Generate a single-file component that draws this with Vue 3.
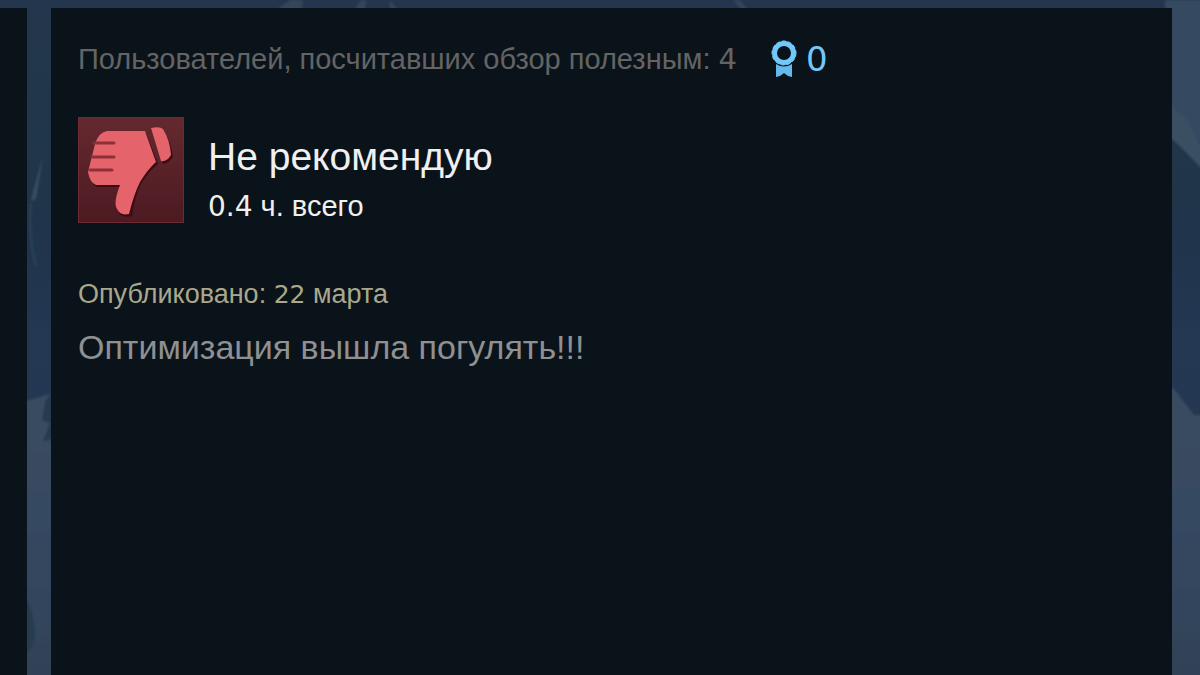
<script setup>
const review = {
  helpful: 4,
  awards: 0,
  verdict: 'Не рекомендую',
  text: 'Оптимизация вышла погулять!!!'
}
</script>

<template>
  <main class="page">
    <svg class="backdrop" viewBox="0 0 1200 675" preserveAspectRatio="none" aria-hidden="true">
      <defs>
        <linearGradient id="sky" x1="0" y1="0" x2="0" y2="1">
          <stop offset="0" stop-color="#24364d" />
          <stop offset="0.22" stop-color="#20364a" />
          <stop offset="0.35" stop-color="#20344b" />
          <stop offset="0.5" stop-color="#243753" />
          <stop offset="1" stop-color="#26384d" />
        </linearGradient>
        <linearGradient id="ridge" x1="0" y1="0" x2="0" y2="1">
          <stop offset="0" stop-color="#394d60" />
          <stop offset="0.45" stop-color="#364861" />
          <stop offset="1" stop-color="#304256" />
        </linearGradient>
        <filter id="soft"><feGaussianBlur stdDeviation="1" /></filter>
      </defs>
      <rect width="1200" height="675" fill="url(#sky)" />
      <g filter="url(#soft)">
        <path d="M276 10 L290 0 H303 L302 10Z M354 10 L361 0 H366 L365 10Z M390 0 L398 10 H390Z M733 0 H740 L748 10 H741Z" fill="#34455a" />
        <path d="M43 156 L33 192 L31 202 L36 198Z" fill="#395062" />
        <path d="M31 204 Q28 235 36 266" fill="none" stroke="#264053" stroke-width="3" />
        <path d="M20 402 L34 399 L55 392 V690 H20Z" fill="url(#ridge)" />
        <path d="M55 385 L45 402 L42 420 L50 423 L43 441 L55 439Z" fill="#253b50" />
        <path d="M20 589 Q34 605 35 636 Q32 654 20 655Z" fill="#253d50" />
        <path d="M1165 0 H1210 V170 L1170 138Z" fill="#344961" />
        <path d="M1170 105 L1187 119 L1204 155 V171 L1170 136Z" fill="#3a5063" />
        <path d="M1168 386 L1174 389 L1194 415 H1210 V690 H1168Z" fill="url(#ridge)" />
      </g>
    </svg>
    <div class="columns">
      <aside class="card"></aside>
      <article class="card review">
        <header class="votes">
          <span>Пользователей, посчитавших обзор полезным: <span class="num">{{ review.helpful }}</span></span>
          <span class="awards">
            <svg class="ribbon" viewBox="0 0 26 38" aria-hidden="true">
              <circle cx="13" cy="13" r="9.5" fill="none" stroke="#72c8fa" stroke-width="5" />
              <circle cx="13" cy="13" r="12" fill="none" stroke="#72c8fa" stroke-width="1" stroke-dasharray="4 2" />
              <path d="M5 24 Q13 29 21 24 V37 L17 36 L13 33 L9 36 L5 37Z" fill="#66b9ec" />
            </svg>
            <span class="num">{{ review.awards }}</span>
          </span>
        </header>

        <section class="verdict">
          <svg class="thumb" viewBox="0 0 106 106" aria-hidden="true">
            <defs>
              <linearGradient id="tile" x1="0" y1="0" x2="0" y2="1">
                <stop offset="0" stop-color="#64292f" />
                <stop offset="1" stop-color="#4d1a22" />
              </linearGradient>
            </defs>
            <rect width="106" height="106" fill="url(#tile)" />
            <rect x="0.5" y="0.5" width="105" height="105" fill="none" stroke="#6d2a30" />
            <path d="M29 14 H67 L79 45 Q70 52 62 65 Q56 77 53 97 Q42 100 39 92 Q35 86 42 68 H18 Q12 66 10 55 L17 27 Q21 15 29 14Z M73 11 Q82 9 85 12 Q92 23 94 38 Q89 45 84 45Z" fill="#3d0b13" transform="translate(1 2)" />
            <path d="M29 14 H67 L78 45 Q70 52 62 65 Q56 77 51 97 Q42 99 39 92 Q35 86 42 68 H18 Q12 66 10 55 L17 27 Q21 15 29 14Z M73 11 Q82 9 85 12 Q92 23 93 38 Q89 45 83 44Z" fill="#e5636a" />
            <path d="M16 26 H36 M14 40 H36 M12 53 H34" fill="none" stroke="#8e3038" stroke-width="3" stroke-linecap="round" />
          </svg>
          <div class="summary">
            <h1>{{ review.verdict }}</h1>
            <p class="hours"><span class="num">0.4</span> ч. всего</p>
          </div>
        </section>

        <p class="date">Опубликовано: <span class="num">22</span> марта</p>
        <p class="body">{{ review.text }}</p>
      </article>
    </div>
  </main>
</template>

<style>
body {
  margin: 0;
  background: #24364d;
}
</style>

<style scoped>
.page {
  position: relative;
  display: flex;
  min-height: 100vh;
  font-family: "Liberation Sans", Arial, sans-serif;
}
.backdrop {
  position: absolute;
  inset: 0;
  width: 100%;
  height: 100%;
}
.columns {
  position: relative;
  flex: 1;
  display: grid;
  grid-template-columns: 27px 1fr;
  gap: 24px;
  padding: 8px 28px 0 0;
}
.card {
  background: #0b131a;
}
.review {
  padding: 31px 27px;
}
.num {
  font-family: "DejaVu Sans", Verdana, sans-serif;
}
.votes {
  display: flex;
  align-items: center;
  gap: 34px;
  height: 40px;
  font-size: 29px;
  line-height: 40px;
  color: #646464;
}
.votes .num {
  font-size: 29px;
}
.awards {
  display: flex;
  align-items: center;
  gap: 9px;
  color: #72c8fa;
}
.awards .num {
  font-size: 34px;
}
.ribbon {
  width: 26px;
  height: 38px;
}
.verdict {
  display: flex;
  align-items: flex-start;
  gap: 24px;
  margin-top: 38px;
}
.thumb {
  width: 106px;
  height: 106px;
}
.summary {
  padding-top: 16px;
}
h1,
p {
  margin: 0;
  font-weight: 400;
}
h1 {
  font-size: 39px;
  line-height: 48px;
  color: #f0f0f0;
}
.hours {
  margin-top: 9px;
  font-size: 29px;
  line-height: 32px;
  color: #f0f0f0;
}
.hours .num {
  font-size: 28px;
}
.date {
  margin-top: 55px;
  font-size: 27px;
  line-height: 32px;
  color: #a9a88e;
}
.date .num {
  font-size: 25px;
}
.body {
  margin-top: 16px;
  font-size: 34px;
  line-height: 40px;
  color: #8f9092;
}
</style>
